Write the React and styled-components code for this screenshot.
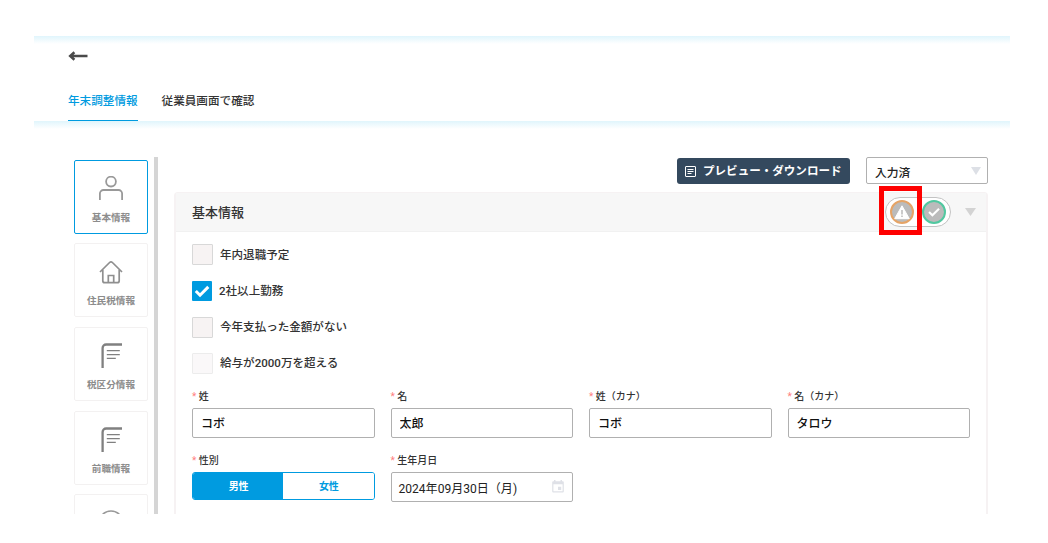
import React, { useState } from 'react';
import styled, { createGlobalStyle } from 'styled-components';

const GlobalStyle = createGlobalStyle`
  * {
    box-sizing: border-box;
  }

  body {
    margin: 0;
    background: #fff;
    color: #333;
    font-family: Roboto, 'Noto Sans CJK JP', sans-serif;
  }

  button,
  input {
    font-family: inherit;
  }
`;

const UserIcon = () => (
  <svg width="26" height="26" viewBox="0 0 26 26" fill="none" stroke="#999" strokeWidth="1.8">
    <circle cx="13" cy="5.6" r="4.9" />
    <path d="M1.9 24v-6.4a3.600 3.600 0 0 1 3.600-3.600h15a3.600 3.600 0 0 1 3.600 3.600V24" />
  </svg>
);

const HomeIcon = () => (
  <svg width="26" height="26" viewBox="0 0 26 26" fill="none" stroke="#8f8f8f" strokeWidth="1.7">
    <path d="M2 13 11.600 3.500a2 2 0 0 1 2.800 0L24 13" />
    <path d="M4.800 10.800v10.900a2 2 0 0 0 2 2h12.400a2 2 0 0 0 2-2V10.800" />
    <path d="M10.300 23.700v-7.200h5.400v7.200" />
  </svg>
);

const DocumentIcon = () => (
  <svg width="26" height="26" viewBox="0 0 26 26" fill="none" stroke="#808080">
    <path d="M4.600 25V5a3.500 3.500 0 0 1 3.500-3.500H24" strokeWidth="2.300" />
    <path d="M8.800 7.700h13M8.800 11.600h13M8.800 15.400h9" strokeWidth="1.300" />
  </svg>
);

const YenIcon = () => (
  <svg width="26" height="26" viewBox="0 0 26 26" fill="none" stroke="#999" strokeWidth="1.6">
    <circle cx="13" cy="13" r="12" />
  </svg>
);

const CheckIcon = ({ size = 20, width = 3 }) => (
  <svg width={size} height={size} viewBox="0 0 20 20" fill="none" stroke="#fff" strokeWidth={width}>
    <path d="m3.800 10 4.200 4.200 8.300-8.300" />
  </svg>
);

const menuItems = [
  { id: 'basic', label: '基本情報', icon: UserIcon },
  { id: 'residentTax', label: '住民税情報', icon: HomeIcon },
  { id: 'taxClass', label: '税区分情報', icon: DocumentIcon },
  { id: 'previousJob', label: '前職情報', icon: DocumentIcon },
  { id: 'payment', icon: YenIcon },
];

const options = [
  { label: '年内退職予定' },
  { label: '2社以上勤務', checked: true },
  { label: '今年支払った金額がない' },
  { label: '給与が2000万を超える', faded: true },
];

const nameFields = [
  { label: '姓', value: 'コボ' },
  { label: '名', value: '太郎' },
  { label: '姓（カナ）', value: 'コボ' },
  { label: '名（カナ）', value: 'タロウ' },
];

const App = () => {
  const [checks, setChecks] = useState(options.map((o) => Boolean(o.checked)));
  const [gender, setGender] = useState('男性');

  const toggle = (index) => {
    setChecks(checks.map((c, i) => (i === index ? !c : c)));
  };

  return (
    <>
      <GlobalStyle />
      <Page>
        <Header>
          <BackButton aria-label="戻る">
            <svg width="20" height="10" viewBox="0 0 20 10" fill="none" stroke="#4a4a4a" strokeWidth="2.500">
              <path d="M19.500 5H2M6.400 1.200 2.200 5l4.200 3.800" />
            </svg>
          </BackButton>
          <Tabs>
            <Tab $active>年末調整情報</Tab>
            <Tab>従業員画面で確認</Tab>
          </Tabs>
        </Header>
        <Body>
          <SideMenu>
            {menuItems.map(({ id, label, icon: Icon }, i) => (
              <MenuCard key={id} $active={i === 0}>
                <Icon />
                {label && <span>{label}</span>}
              </MenuCard>
            ))}
          </SideMenu>
          <Main>
            <Toolbar>
              <PreviewButton>
                <svg width="11" height="11" viewBox="0 0 11 11" fill="none" stroke="#fff">
                  <rect x=".5" y=".5" width="10" height="10" rx=".5" />
                  <path d="M2.500 3.500h6M2.500 5.500h6M2.500 7.500h4" />
                </svg>
                <span>プレビュー・ダウンロード</span>
              </PreviewButton>
              <Select>
                入力済
                <Triangle $color="#dde0e6" $width={10} />
              </Select>
            </Toolbar>
            <Panel>
              <PanelHeader>
                <PanelTitle>基本情報</PanelTitle>
                <StatusGroup>
                  <StatusDot $color="#e5a467">
                    <svg width="16" height="15" viewBox="0 0 16 15">
                      <path d="M8 .8 15.300 13.700H.7z" fill="#fff" stroke="#fff" strokeLinejoin="round" />
                      <path d="M8 5v4.500M8 10.500v1.500" stroke="#bbb" strokeWidth="1.500" />
                    </svg>
                  </StatusDot>
                  <StatusDot $color="#51c8a0">
                    <CheckIcon size={16} width={2.6} />
                  </StatusDot>
                  <Highlight />
                </StatusGroup>
                <Triangle $color="#d3d3d3" $width={11} />
              </PanelHeader>
              <PanelBody>
                <Options>
                  {options.map(({ label, faded }, i) => (
                    <Option key={label} onClick={() => toggle(i)}>
                      <Checkbox $checked={checks[i]} $faded={faded}>
                        {checks[i] && <CheckIcon />}
                      </Checkbox>
                      <span>{label}</span>
                    </Option>
                  ))}
                </Options>
                <Fields>
                  {nameFields.map(({ label, value }) => (
                    <Field key={label}>
                      <Label>{label}</Label>
                      <Input defaultValue={value} />
                    </Field>
                  ))}
                  <Field>
                    <Label>性別</Label>
                    <Segment>
                      {['男性', '女性'].map((g) => (
                        <SegmentButton key={g} $active={gender === g} onClick={() => setGender(g)}>
                          {g}
                        </SegmentButton>
                      ))}
                    </Segment>
                  </Field>
                  <Field>
                    <Label>生年月日</Label>
                    <DateBox>
                      2024年09月30日（月)
                      <svg width="12" height="13" viewBox="0 0 12 13">
                        <path
                          fill="#dfe1e7"
                          fillRule="evenodd"
                          d="M2 0h1.500v1.200h5V0H10v1.200h.8q1 0 1 1v9.300q0 1-1 1H1.200q-1 0-1-1V2.200q0-1 1-1H2zM1.400 4.300v7h9.200v-7zM6 6.800h3.200V10H6z"
                        />
                      </svg>
                    </DateBox>
                  </Field>
                </Fields>
              </PanelBody>
            </Panel>
          </Main>
        </Body>
      </Page>
    </>
  );
};

export default App;

const Page = styled.div`
  display: flex;
  flex-direction: column;
  width: 976px;
  height: 478px;
  margin: 36px 0 0 34px;
  overflow: hidden;
`;

const Header = styled.header`
  flex: none;
  height: 85px;
  padding: 15px 34px 0;
  background: linear-gradient(#e0f5fc, #fff 8px);
`;

const BackButton = styled.button`
  display: block;
  height: 10px;
  padding: 0;
  border: 0;
  background: none;

  svg {
    display: block;
  }
`;

const Tabs = styled.nav`
  display: flex;
  gap: 24px;
  margin-top: 20px;
`;

const Tab = styled.div`
  height: 40px;
  padding-top: 1px;
  border-bottom: 1px solid ${({ $active }) => ($active ? '#009be0' : 'transparent')};
  color: ${({ $active }) => ($active ? '#009be0' : '#333')};
  font-size: 11.6px;
  font-weight: 500;
  line-height: 39px;
`;

const Body = styled.div`
  display: flex;
  flex: 1;
  min-height: 0;
  padding: 36px 22px 0 40px;
  background: linear-gradient(#e0f5fc, #fff 8px);
`;

const SideMenu = styled.aside`
  display: flex;
  flex-direction: column;
  gap: 9.600px;
  flex: none;
  width: 84px;
  padding-top: 2.800px;
  border-right: 4px solid #d5d5d5;
  overflow: hidden;
`;

const MenuCard = styled.div`
  display: flex;
  flex: none;
  flex-direction: column;
  align-items: center;
  gap: 9px;
  width: 74px;
  height: 74px;
  padding-top: 15px;
  border: 1px solid ${({ $active }) => ($active ? '#009be0' : '#f3f1f1')};
  border-radius: 2px;
  color: #8c8c8c;
  font-size: 9.600px;
  font-weight: 700;
  line-height: 14px;

  svg {
    flex: none;
  }
`;

const Main = styled.main`
  display: flex;
  flex: 1;
  flex-direction: column;
  min-width: 0;
  padding-left: 16px;
`;

const Toolbar = styled.div`
  display: flex;
  justify-content: flex-end;
  align-items: flex-end;
  gap: 16px;
  flex: none;
  height: 27px;
`;

const PreviewButton = styled.button`
  display: flex;
  align-items: center;
  gap: 7px;
  width: 173px;
  height: 26px;
  padding: 0 8px;
  border: 0;
  border-radius: 3px;
  background: #34495e;
  color: #fff;
  font-size: 11.550px;
  font-weight: 700;
  white-space: nowrap;

  span {
    padding-bottom: 2px;
  }
`;

const Select = styled.div`
  display: flex;
  align-items: center;
  justify-content: space-between;
  width: 122px;
  height: 27px;
  padding: 1px 6px 0 8px;
  border: 1px solid #b0b0b0;
  border-radius: 2px;
  color: #222;
  font-size: 11.800px;
  font-weight: 500;
`;

const Triangle = styled.span`
  width: ${({ $width }) => $width}px;
  height: 8px;
  background: ${({ $color }) => $color};
  clip-path: polygon(0 0, 100% 0, 50% 100%);
`;

const Panel = styled.section`
  flex: 1;
  margin-top: 8px;
  border: solid #f6f2f3;
  border-width: 1px 2px 0;
  border-radius: 4px 4px 0 0;
`;

const PanelHeader = styled.div`
  display: flex;
  align-items: center;
  height: 39px;
  padding: 0 10px 0 16px;
  border-bottom: 1px solid #f1f1f1;
  background: #f7f7f7;
`;

const PanelTitle = styled.h2`
  flex: 1;
  margin: 0;
  padding-bottom: 2px;
  font-size: 13px;
  font-weight: 500;
`;

const StatusGroup = styled.div`
  position: relative;
  display: flex;
  align-items: center;
  gap: 8px;
  width: 66px;
  height: 30px;
  margin-right: 14px;
  padding: 0 4px;
  border: 1px solid #c3c3c3;
  border-radius: 15px;
  background: #fff;
`;

const StatusDot = styled.span`
  display: flex;
  flex: none;
  align-items: center;
  justify-content: center;
  width: 24px;
  height: 24px;
  border: 2px solid ${({ $color }) => $color};
  border-radius: 50%;
  background: #bbb;
`;

/* marker frame over the warning status */
const Highlight = styled.span`
  position: absolute;
  top: -12px;
  left: -7px;
  width: 43px;
  height: 49px;
  border: 5px solid #f00;
`;

const PanelBody = styled.div`
  padding: 12px 16px 0;
`;

const Options = styled.div`
  display: flex;
  flex-direction: column;
  gap: 15.300px;
`;

const Option = styled.label`
  display: flex;
  align-items: center;
  gap: 7px;
  height: 21px;
  font-size: 11.550px;
  font-weight: 500;

  span:last-child {
    padding-bottom: 2px;
  }
`;

const Checkbox = styled.span`
  display: flex;
  width: ${({ $checked }) => ($checked ? 20 : 21)}px;
  height: ${({ $checked }) => ($checked ? 20 : 21)}px;
  border: ${({ $checked }) => ($checked ? 0 : 1)}px solid ${({ $faded }) => ($faded ? '#ececec' : '#d8d8d8')};
  border-radius: 1px;
  background: ${({ $checked, $faded }) => {
    if ($checked) return '#009be0';
    return $faded ? '#faf8f9' : '#f7f3f3';
  }};
`;

const Fields = styled.div`
  display: grid;
  grid-template-columns: repeat(4, 1fr);
  gap: 14px 16px;
  margin-top: 14px;
`;

const Field = styled.div`
  display: flex;
  flex-direction: column;
  gap: 3px;
`;

const Label = styled.label`
  height: 17px;
  padding-top: 1px;
  font-size: 10px;
  font-weight: 500;
  line-height: 16px;

  &::before {
    content: '*';
    margin-right: 2.500px;
    color: #ff8080;
    font-weight: 400;
  }
`;

const Input = styled.input`
  width: 100%;
  height: 30px;
  padding: 0 8px;
  border: 1px solid #b0b0b0;
  border-radius: 2px;
  outline: none;
  color: #111;
  font-size: 12px;
  font-weight: 500;
`;

const Segment = styled.div`
  display: flex;
  height: 28px;
  border: 1px solid #009be0;
  border-radius: 3px;
  overflow: hidden;
`;

const SegmentButton = styled.button`
  flex: 1;
  padding: 0 0 1px 1px;
  border: 0;
  background: ${({ $active }) => ($active ? '#009be0' : '#fff')};
  color: ${({ $active }) => ($active ? '#fff' : '#009be0')};
  font-size: 10px;
  font-weight: 700;
`;

const DateBox = styled.div`
  display: flex;
  align-items: center;
  justify-content: space-between;
  height: 30px;
  padding: 2px 8px 0 7px;
  border: 1px solid #b0b0b0;
  border-radius: 2px;
  color: #222;
  font-size: 12.050px;

  svg {
    margin-top: -2px;
  }
`;
